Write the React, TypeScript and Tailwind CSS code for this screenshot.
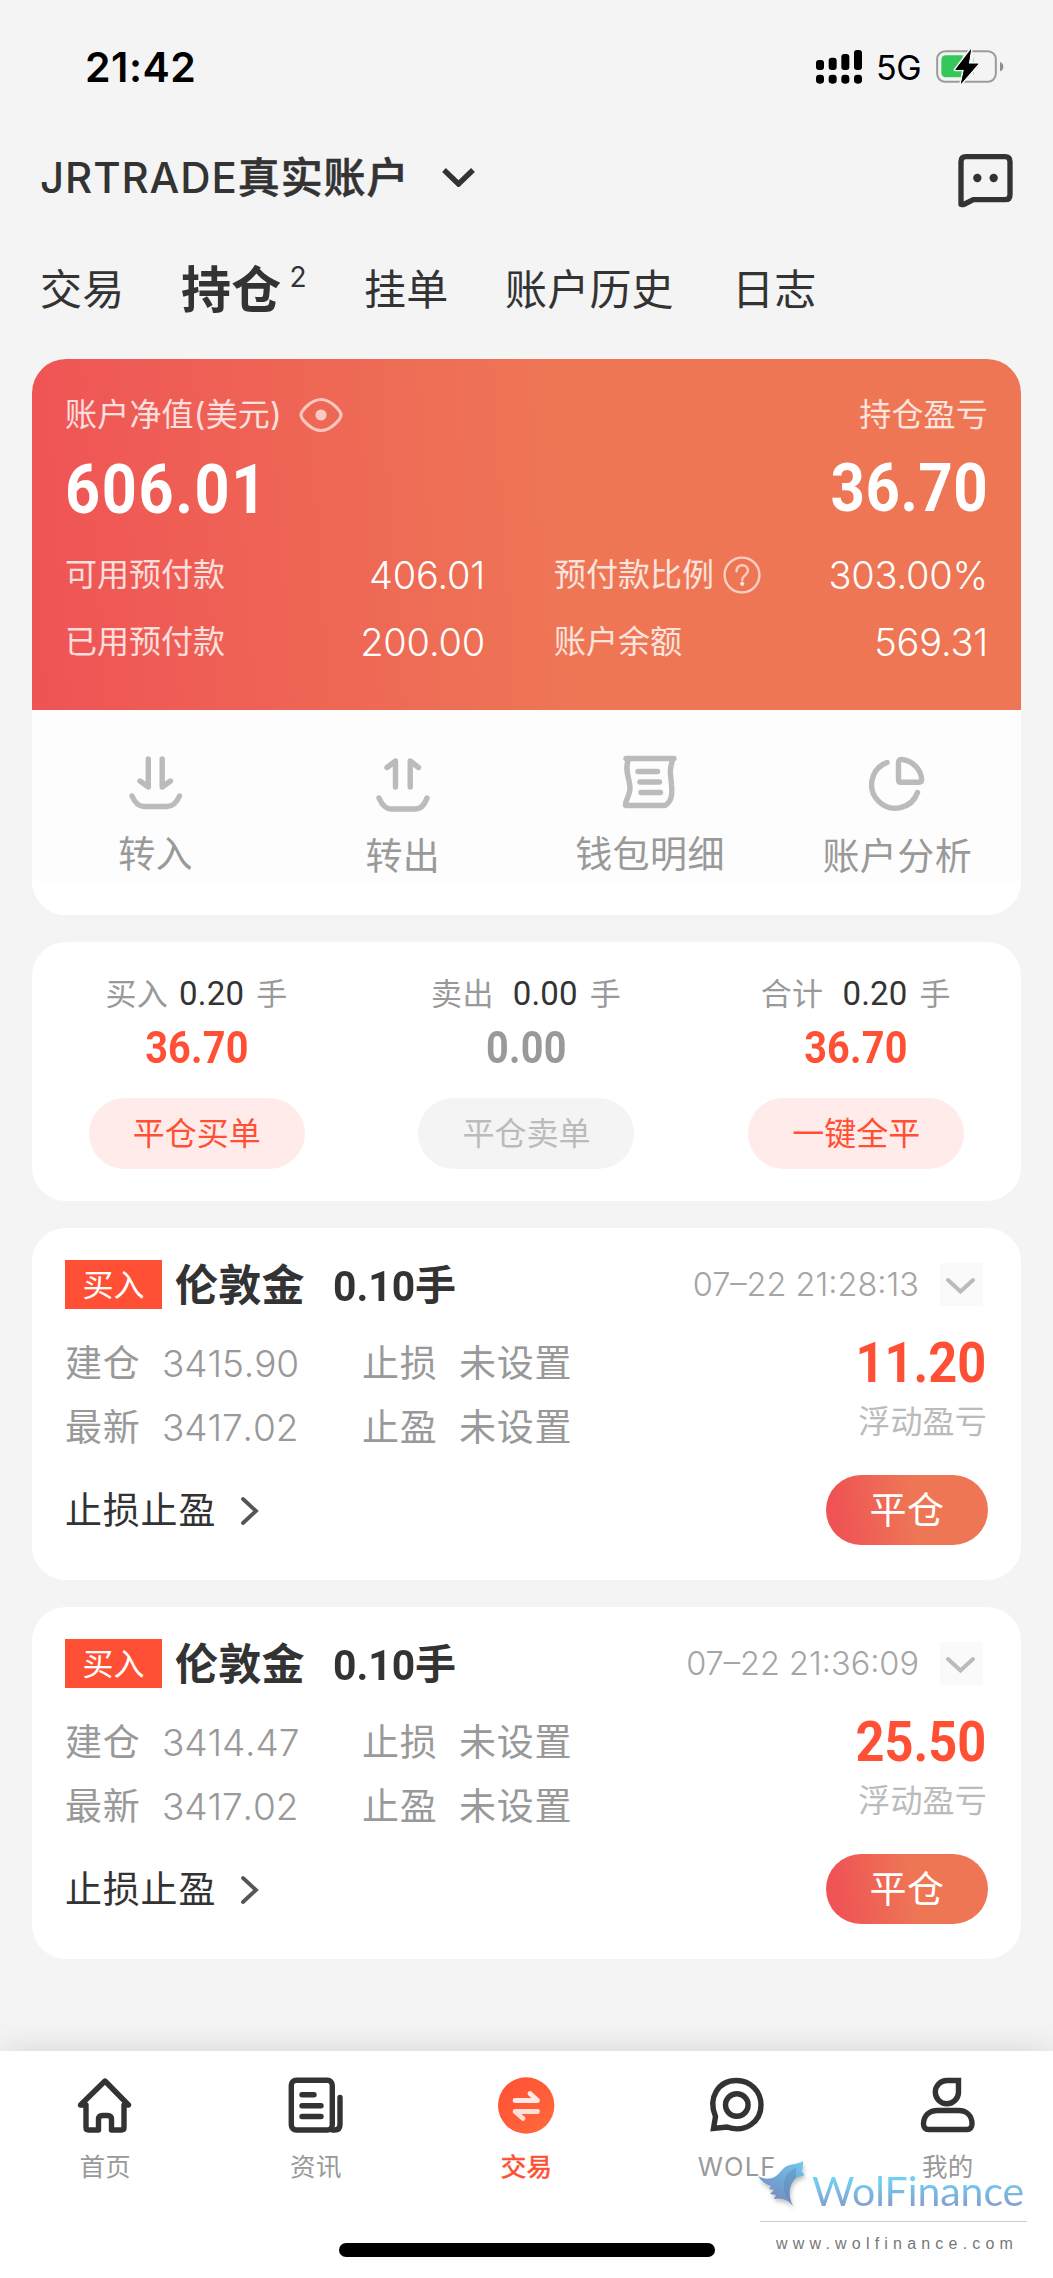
import React from "react";

const SANS = "font-['Inter','Noto_Sans_CJK_SC',sans-serif]";
const DIN = "font-['Roboto','Noto_Sans_CJK_SC',sans-serif]";

function SignalIcon() {
  const tops = [60, 53, 42, 30];
  return (
    <svg className="h-[34px] w-[46px]" viewBox="0 0 138 102" fill="#000">
      {tops.map((t, i) => (
        <g key={t}>
          <rect x={i * 38} y={t - 30} width="24" height={90 - t} rx="9" />
          <rect x={i * 38} y="74" width="24" height="27" rx="10" />
        </g>
      ))}
    </svg>
  );
}

function BatteryIcon() {
  return (
    <svg className="h-[36px] w-[68px]" viewBox="0 0 204 108">
      <rect x="3.5" y="6.5" width="176" height="92" rx="24" fill="none" stroke="#9b9b9b" strokeWidth="6" />
      <path d="M192 39q10 4 10 14t-10 14z" fill="#8d8d8d" />
      <rect x="16" y="19" width="98" height="66" rx="13" fill="#35c759" />
      <path d="M80 19H113V85H80z" fill="#f4f4f4" />
      <path d="M105 1L58 62H84L75 104L127 44H98z" fill="#000" stroke="#f4f4f4" strokeWidth="10" paintOrder="stroke" strokeLinejoin="round" />
      <path d="M105 1L58 62H84L75 104L127 44H98z" fill="#000" />
    </svg>
  );
}

function ChatIcon() {
  return (
    <svg className="mt-[7px] h-[56px] w-[56px]" viewBox="0 0 168 168" fill="none" stroke="#333" strokeWidth="16" strokeLinejoin="round">
      <path d="M9 154V26Q9 11 24 11H141Q156 11 156 26V125Q156 140 141 140H46L20 153Q9 158 9 151z" />
      <circle cx="58" cy="75" r="12.5" fill="#333" stroke="none" />
      <circle cx="107" cy="75" r="12.5" fill="#333" stroke="none" />
    </svg>
  );
}

function StatusBar() {
  return (
    <div className="flex h-[134px] items-center justify-between pl-[85px] pr-[49px] text-black">
      <span className="text-[41px] font-semibold leading-none tracking-[0.5px]">21:42</span>
      <div className="flex items-center">
        <SignalIcon />
        <span className="ml-[14px] w-[60px] pt-[2px] text-[34px] leading-none tracking-[-0.3px]">5G</span>
        <BatteryIcon />
      </div>
    </div>
  );
}

function Header() {
  return (
    <div className="flex h-[86px] items-center justify-between pl-[40px] pr-[39px] text-[#333]">
      <div className="flex items-center">
        <span className="whitespace-nowrap pt-[2px] text-[42px] font-medium leading-none tracking-[0.9px]">
          JRTRADE<span className="[-webkit-text-stroke:0.6px_#333]">真实账户</span>
        </span>
        <svg className="ml-[33px] h-[20px] w-[33px]" viewBox="0 0 33 20" fill="none" stroke="#333" strokeWidth="5.4">
          <path d="M2 3L16.5 17L31 3" />
        </svg>
      </div>
      <ChatIcon />
    </div>
  );
}

function Tabs() {
  return (
    <div className="grid h-[139px] grid-cols-[141px_183px_141px_227px_1fr] items-center whitespace-nowrap pl-[40px] text-[42px] leading-none tracking-[0.2px] text-[#333]">
      <span>交易</span>
      <span className="flex items-center text-[50px] font-bold">
        持仓
        <sup className="top-0 mb-[26px] ml-[8px] text-[28px] font-normal leading-none">2</sup>
      </span>
      <span>挂单</span>
      <span>账户历史</span>
      <span>日志</span>
    </div>
  );
}

function Stat({ label, value, help }: { label: string; value: string; help?: boolean }) {
  return (
    <div className="flex h-[67px] items-center justify-between">
      <span className="flex items-center pt-[1px] text-[32px] leading-none text-white/80">
        {label}
        {help && (
          <svg className="ml-[9px] h-[38px] w-[38px]" viewBox="0 0 38 38" fill="none" stroke="#fff" strokeOpacity="0.65" strokeWidth="2.4" strokeLinecap="round">
            <circle cx="19" cy="19" r="17.4" />
            <path d="M13.5 15.2c0-8 11.5-7.600 11.500-.4 0 4.200-5.800 4.500-5.800 9.200" />
            <circle cx="19.200" cy="27.800" r="1" fill="#fff" />
          </svg>
        )}
      </span>
      <span className="text-[38px] font-[350] leading-none tracking-[-0.2px] text-white">{value}</span>
    </div>
  );
}

function Hero() {
  return (
    <div className="h-[351px] bg-[linear-gradient(86deg,#ef5355_0%,#ee7655_54%)] px-[33px] pt-[32px]">
      <div className="flex h-[46px] items-center justify-between pt-[1px] text-[32px] leading-none tracking-[0.2px] text-white/80">
        <span className="flex items-center">
          账户净值(美元)
          <svg className="ml-[17px] h-[36px] w-[44px]" viewBox="0 0 44 36" fill="none" stroke="#fff" strokeOpacity="0.62" strokeWidth="3.200">
            <path d="M2 18C2 14 12 2.500 22 2.500S42 14 42 18 32 33.500 22 33.500 2 22 2 18z" />
            <circle cx="22" cy="18" r="5.600" fill="#fff" fillOpacity="0.65" stroke="none" />
          </svg>
        </span>
        <span>持仓盈亏</span>
      </div>
      <div className={"flex h-[104px] items-center justify-between font-bold leading-none text-white " + DIN}>
        <span className="origin-left scale-x-[0.9] pt-[2px] text-[68px] tracking-[1.800px]">606.01</span>
        <span className="origin-right scale-x-[0.91] text-[66px] tracking-[0.500px]">36.70</span>
      </div>
      <div className="grid grid-cols-[420px_434px] justify-between">
        <Stat label="可用预付款" value="406.01" />
        <Stat label="预付款比例" value="303.00%" help />
        <Stat label="已用预付款" value="200.00" />
        <Stat label="账户余额" value="569.31" />
      </div>
    </div>
  );
}

const actionIcons: Record<string, React.ReactNode> = {
  转入: (
    <>
      <path d="M19.300 4V32L11 26M33.200 4V32L41.500 26" />
      <path d="M3 41C6 48 9.500 51.500 15 51.500H38C43.500 51.500 47.500 48 50.500 41" />
    </>
  ),
  转出: (
    <>
      <path d="M19.500 30V4L11 10.500M34.200 30V4L42.500 10.500" />
      <path d="M3 41C6 48 9.500 52 15 52H39C44.500 52 48.500 48 51 41" />
    </>
  ),
  钱包明细: (
    <>
      <path d="M3 3.500H51M5.500 4C1 16 7 24 7 33C7 40 2 46 2.500 50.500H42C50 46 49 36 48.500 30C48 20 45.500 16 50 4" />
      <path d="M15 16.500H34.500M17 27H36.500M18 37.500H37.500" />
    </>
  ),
  账户分析: (
    <>
      <path d="M17 5.500A23.600 23.600 0 1 0 47.500 35.500" />
      <path d="M28.500 6Q28.500 2 32.500 2.500C43 4 51 12.500 51.700 22.500Q51.700 25.300 48 25.300H31Q28.500 25.300 28.500 22.500z" />
    </>
  ),
};

function Actions() {
  return (
    <div className="grid h-[205px] grid-cols-4 bg-[linear-gradient(#fdfdfd_84%,#fff_84%)]">
      {Object.entries(actionIcons).map(([label, icon], i) => (
        <div key={label} className={"flex flex-col items-center " + (i % 2 ? "pt-[47px]" : "pt-[45px]")}>
          <svg className="h-[56px] w-[54px] overflow-visible" viewBox="0 0 54 56" fill="none" stroke="#bbb" strokeWidth="5.400" strokeLinecap="round" strokeLinejoin="round">
            {icon}
          </svg>
          <span className="mt-[19px] h-[50px] whitespace-nowrap text-[37px] leading-[50px] tracking-[0.500px] text-[#999]">{label}</span>
        </div>
      ))}
    </div>
  );
}

const totals = [
  { label: "买入", gap: "mr-[11px]", lots: "0.20", pnl: "36.70", action: "平仓买单", active: true },
  { label: "卖出", gap: "mr-[19px]", lots: "0.00", pnl: "0.00", action: "平仓卖单", active: false },
  { label: "合计", gap: "mr-[19px]", lots: "0.20", pnl: "36.70", action: "一键全平", active: true },
];

function Totals() {
  return (
    <section className="mt-[27px] grid h-[259px] grid-cols-3 rounded-[34px] bg-white pt-[27px]">
      {totals.map((t) => (
        <div key={t.label} className="flex flex-col items-center">
          <div className="flex h-[49px] items-center pr-[1px] text-[31px] leading-none text-[#999]">
            <span className={"tracking-[0.300px] " + t.gap}>{t.label}</span>
            <span className={"text-[33px] leading-none tracking-[0.200px] text-[#333] " + DIN}>{t.lots}</span>
            <span className="ml-[12px]">手</span>
          </div>
          <div className={"flex h-[61px] scale-x-[0.91] items-center pt-[1px] text-[43.500px] font-bold leading-none tracking-[0.300px] " + DIN + (t.active ? " text-[#ff5035]" : " text-[#999]")}>{t.pnl}</div>
          <button className={"mt-[19px] h-[71px] w-[216px] rounded-full text-[32px] leading-none " + (t.active ? "bg-[#ffecea] text-[#ff5035]" : "bg-[#f4f4f4] text-[#bbb]")}>{t.action}</button>
        </div>
      ))}
    </section>
  );
}

function Position({ time, open, last, pnl }: { time: string; open: string; last: string; pnl: string }) {
  return (
    <section className="mt-[27px] h-[352px] rounded-[34px] bg-white px-[33px] pt-[32px] text-[#333]">
      <div className="flex h-[49px] items-center justify-between">
        <div className="flex items-center whitespace-nowrap">
          <span className="h-[49px] w-[97px] bg-[#ff5035] text-center text-[31px] leading-[50px] text-white">买入</span>
          <span className="ml-[13px] pt-[2px] text-[43px] font-bold leading-none tracking-[0.200px]">伦敦金</span>
          <span className={"ml-[28px] flex items-center pt-[3px] text-[43px] font-bold leading-none " + DIN}>
            <span className="origin-left scale-x-[0.95]">0.10</span>
            <span className="ml-[-4px] text-[41px]">手</span>
          </span>
        </div>
        <div className="flex items-center">
          <span className="pt-[2px] text-[32.500px] font-light leading-none text-[#a5a5a5]">{time}</span>
          <svg className="ml-[21px] mr-[5px] h-[43px] w-[43px] bg-[#fafafa]" viewBox="0 0 43 43" fill="none" stroke="#bbb" strokeWidth="4" strokeLinecap="round">
            <path d="M8 17L20.500 28.500L33 17" />
          </svg>
        </div>
      </div>
      <div className="mt-[22px] flex justify-between text-[#999]">
        <div className="grid auto-rows-[64px] grid-cols-[97px_200px_97px_120px] items-center whitespace-nowrap text-[37px] leading-none tracking-[0.800px]">
          <span>建仓</span>
          <span className="font-[350] tracking-[-0.100px] [font-kerning:none]">{open}</span>
          <span>止损</span>
          <span>未设置</span>
          <span>最新</span>
          <span className="font-[350] tracking-[-0.100px] [font-kerning:none]">{last}</span>
          <span>止盈</span>
          <span>未设置</span>
        </div>
        <div className="flex flex-col items-end pr-[1px]">
          <span className={"flex h-[64px] origin-right scale-x-[0.92] items-center pr-[1px] text-[55px] font-bold leading-none text-[#ff5035] " + DIN}>{pnl}</span>
          <span className="flex h-[52px] items-center pt-[1px] text-[32px] leading-none tracking-[0.200px] text-[#bbb]">浮动盈亏</span>
        </div>
      </div>
      <div className="mt-[16px] flex items-center justify-between">
        <div className="flex items-center pt-[1px] text-[37px] leading-none tracking-[0.800px]">
          止损止盈
          <svg className="ml-[24px] h-[30px] w-[20px]" viewBox="0 0 20 30" fill="none" stroke="#555" strokeWidth="3.800" strokeLinecap="round">
            <path d="M3 3L16 15L3 27" />
          </svg>
        </div>
        <button className="h-[70px] w-[162px] rounded-full bg-[linear-gradient(82deg,#ef5355_8%,#ee7655_54%)] pt-[1px] text-[37px] leading-none tracking-[0.500px] text-white">平仓</button>
      </div>
    </section>
  );
}

const navItems = [
  {
    label: "首页",
    icon: (
      <g fill="none" stroke="#333" strokeWidth="5.400" strokeLinejoin="round" strokeLinecap="round">
        <path d="M3 27.500L27.500 3.500L51 27.500H46.500V50Q46.500 52.500 44 52.500H34V42Q34 38 30 38H25Q21 38 21 42V52.500H11Q8.500 52.500 8.500 50V27.500z" />
      </g>
    ),
  },
  {
    label: "资讯",
    icon: (
      <g fill="none" stroke="#333" strokeWidth="5.400" strokeLinejoin="round" strokeLinecap="round">
        <rect x="2.800" y="2.800" width="41" height="49.700" rx="5" />
        <path d="M44 52.500H46Q51.500 52.500 51.500 47V20M13.500 17.300H25.500M13.500 28.200H32.500M13.500 39H32.500" />
      </g>
    ),
  },
  {
    label: "交易",
    icon: (
      <g>
        <circle cx="27.700" cy="28" r="28.200" fill="url(#navActive)" />
        <g fill="none" stroke="#ffdfd8" strokeWidth="4.800" strokeLinejoin="round" strokeLinecap="round">
          <path d="M16.500 23H39L31.500 16" stroke="#ffe9e4" />
          <path d="M39 34H16.500L24.500 41" />
        </g>
      </g>
    ),
  },
  {
    label: "WOLF",
    icon: (
      <g fill="none" stroke="#333" strokeWidth="5.400">
        <path d="M4 51L6 39C-2 20 9 3 27 3C41 3 51.500 14 51.500 27.500C51.500 44 36 56 17.500 49.500z" />
        <circle cx="27.300" cy="27.500" r="11.300" />
      </g>
    ),
  },
  {
    label: "我的",
    icon: (
      <g fill="none" stroke="#333" strokeWidth="5.400">
        <path d="M38 3H26.500A11.600 11.600 0 1 0 38 14.500z" />
        <path d="M3 46.500C3 38 9 33 17 33H38C46 33 51.500 38 51.500 46.500C51.500 50 49.500 52 46.500 52H8C5 52 3 50 3 46.500z" />
      </g>
    ),
  },
];

function Watermark() {
  return (
    <div className="absolute left-[758px] top-[108px] w-[272px]">
      <div className="flex h-[62px]">
        <svg className="mt-[2px] h-[50px] w-[50px] overflow-visible drop-shadow-[1px_3px_2px_rgba(0,0,0,0.25)]" viewBox="0 0 50 50">
          <defs>
            <linearGradient id="wolf" x1="1" y1="0" x2="0.500" y2="1">
              <stop offset="0" stopColor="#6fcbee" />
              <stop offset="1" stopColor="#7489bf" />
            </linearGradient>
          </defs>
          <path fill="url(#wolf)" d="M45 0C40 4 30 2 25 8C21 12 18 17 12 17.500C8 18 3 17 0 15C3 20 7 23 13 25L11 28L16 29L12 33L18 34L16 38C23 36 31 39 35 45C30 36 30 24 38 17C41 15 44 16 46.500 14L43.500 10C45 7 45 3 45 0z" />
          <path fill="#5f82b8" fillOpacity="0.45" d="M38 7C27 11 22 24 29 37L35 45C30 36 30 24 38 17z" />
        </svg>
        <span className="ml-[4px] mt-[7px] bg-[linear-gradient(#6fd0f2_25%,#8a93c4_85%)] bg-clip-text font-['Lato',sans-serif] text-[41px] leading-[50px] tracking-[-0.050px] text-transparent">WolFinance</span>
      </div>
      <div className="ml-[2px] h-px w-[267px] bg-[#ccc]" />
      <div className="ml-[18px] mt-[11px] whitespace-nowrap font-['Liberation_Sans',sans-serif] text-[16px] leading-[22px] tracking-[5.200px] text-[#777]">www.wolfinance.com</div>
    </div>
  );
}

function BottomNav() {
  return (
    <nav className="relative mt-[92px] h-[227px] bg-white shadow-[0_0_32px_rgba(0,0,0,0.13)]">
      <div className="grid grid-cols-5 pt-[26px]">
        {navItems.map((n) => (
          <div key={n.label} className="flex flex-col items-center">
            <svg className="h-[56px] w-[56px] overflow-visible" viewBox="-0.500 -0.500 56 56">
              <defs>
                <linearGradient id="navActive" x1="0" y1="0" x2="1" y2="1">
                  <stop offset="0" stopColor="#ff4f33" />
                  <stop offset="1" stopColor="#ff6a3c" />
                </linearGradient>
              </defs>
              {n.icon}
            </svg>
            <span className={"mt-[14px] text-[25.500px] leading-[40px] " + (n.label === "WOLF" ? "tracking-[1.200px] " : "tracking-[0.300px] ") + (n.label === "交易" ? "text-[#ff5035] [-webkit-text-stroke:0.600px_#ff5035]" : "text-[#999]")}>{n.label}</span>
          </div>
        ))}
      </div>
      <div className="mx-auto mt-[56px] h-[14px] w-[376px] rounded-full bg-black" />
      <Watermark />
    </nav>
  );
}

export default function App() {
  return (
    <div className={"h-[2278px] w-[1053px] overflow-hidden bg-[#f4f4f4] " + SANS}>
      <StatusBar />
      <Header />
      <Tabs />
      <main className="px-[32px]">
        <section className="overflow-hidden rounded-[34px] bg-white">
          <Hero />
          <Actions />
        </section>
        <Totals />
        <Position time="07–22 21:28:13" open="3415.90" last="3417.02" pnl="11.20" />
        <Position time="07–22 21:36:09" open="3414.47" last="3417.02" pnl="25.50" />
      </main>
      <BottomNav />
    </div>
  );
}
